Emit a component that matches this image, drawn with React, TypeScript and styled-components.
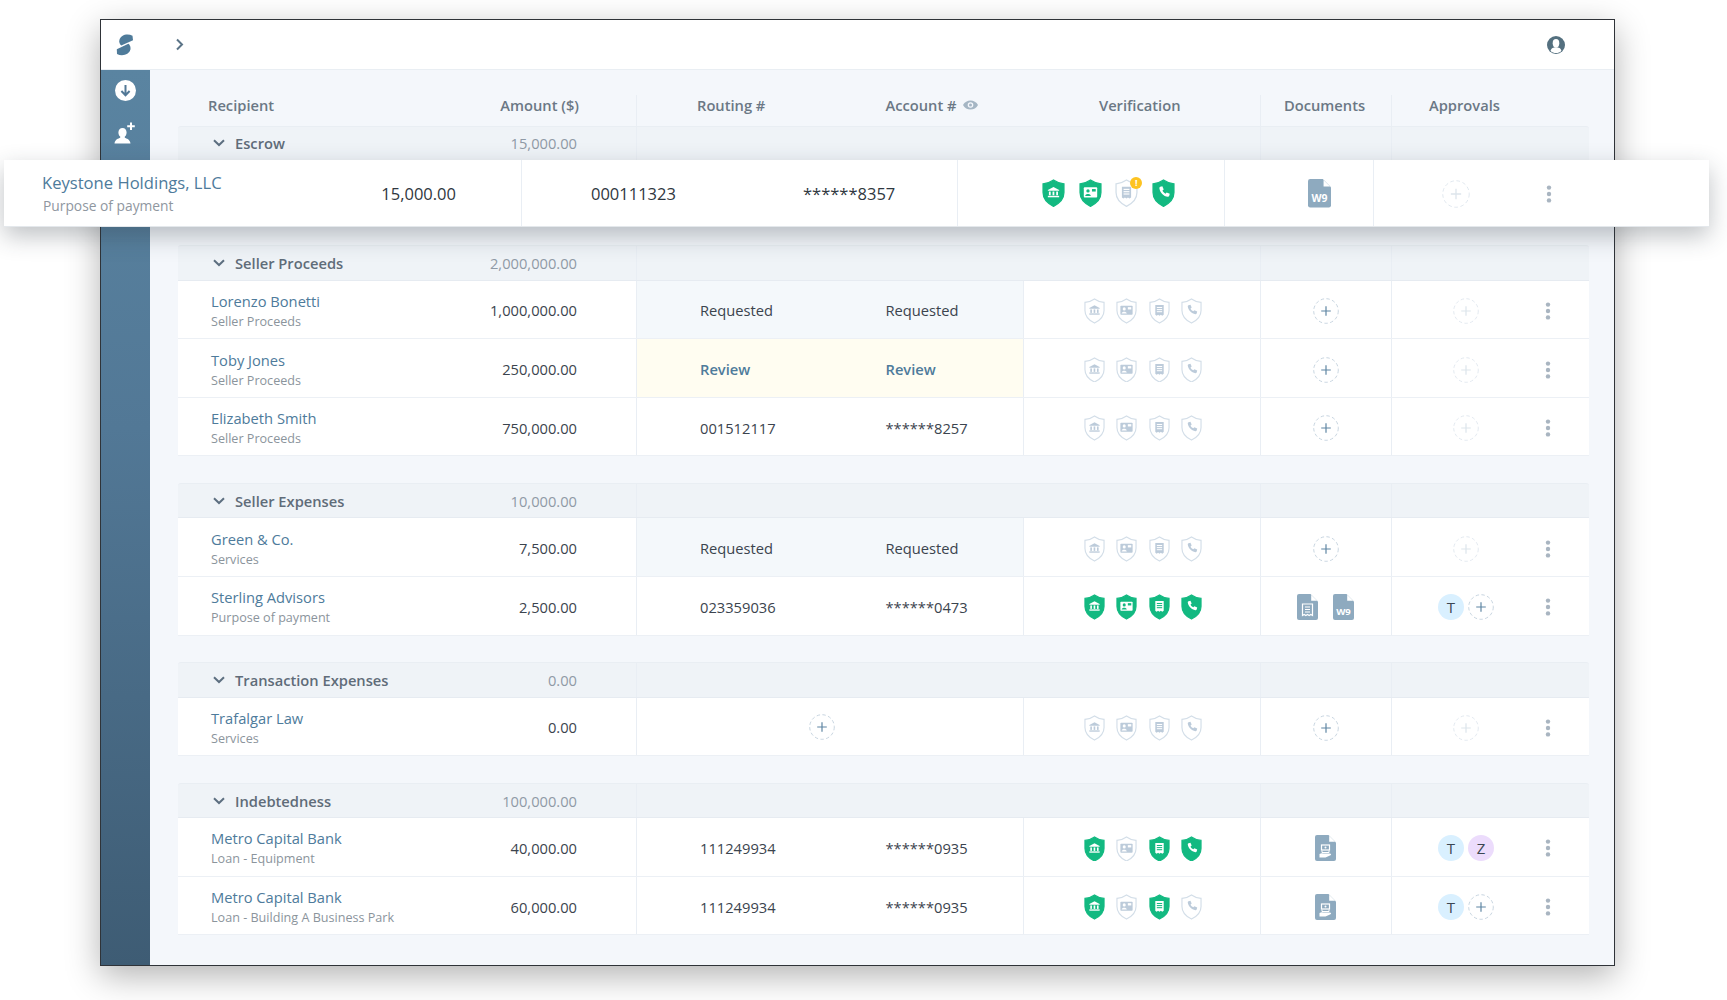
import React from "react";
import styled, { createGlobalStyle } from "styled-components";

const Global = createGlobalStyle`
  html, body { margin: 0; padding: 0; background: #fff; }
  body { font-family: "Open Sans", "Liberation Sans", sans-serif; color: #3b444e; }
  * { box-sizing: border-box; }
`;

const COLUMNS = "458px 387px 237px 131px 198px";
const LINE = "#e9eef4";

const Page = styled.div`
  position: relative;
  width: 1727px;
  height: 1000px;
  padding: 19px 0 0 100px;
  overflow: hidden;
`;
const Window = styled.div`
  width: 1515px;
  height: 947px;
  border: 1px solid #2f3338;
  background: #f4f7fb;
  box-shadow: 0 10px 32px rgba(0, 0, 0, 0.3);
  display: flex;
  flex-direction: column;
`;
const TopBar = styled.header`
  flex: 0 0 50px;
  background: #fff;
  border-bottom: 1px solid #e9eef3;
  display: flex;
  align-items: center;
  padding: 0 49px 0 15px;
`;
const ExpandButton = styled.span`
  display: flex;
  margin-left: 41px;
`;
const ProfileButton = styled.span`
  display: flex;
  margin-left: auto;
`;
const Body = styled.div`
  flex: 1;
  display: flex;
  min-height: 0;
`;
const SideBar = styled.nav`
  flex: 0 0 49px;
  background: linear-gradient(180deg, #5a84a1 0%, #527896 40%, #3e5c74 100%);
  display: flex;
  flex-direction: column;
  align-items: center;
  padding: 10px 1px 0 0;
  gap: 21px;
`;
const Content = styled.main`
  flex: 1;
  padding: 0 25px 0 28px;
`;
const HeaderRow = styled.div`
  display: grid;
  grid-template-columns: ${COLUMNS};
  height: 55.5px;
  padding-top: 25px;
  font-size: 14.7px;
  font-weight: 600;
  line-height: 20px;
  color: #6b7885;
`;
const HeaderCell = styled.div<{ $divider?: boolean; $pad?: number }>`
  display: flex;
  padding-left: ${(p) => p.$pad ?? 0}px;
  border-left: ${(p) => (p.$divider ? `1px solid ${LINE}` : "none")};
`;
const HeaderBank = styled.div`
  display: grid;
  grid-template-columns: 188.5px 1fr;
  align-content: start;
  padding-left: 60px;
  border-left: 1px solid ${LINE};
`;
const HeaderAmount = styled.span`
  margin-left: auto;
  padding-right: 57px;
`;
const HeaderAccount = styled.span`
  display: flex;
  align-items: center;
  gap: 5px;
`;
const Section = styled.section`
  margin-bottom: 26.7px;
`;
const GroupRow = styled.div`
  display: grid;
  grid-template-columns: 458px 624px 131px 198px;
  height: 35.3px;
  background: #eff3f7;
  border-top: 1px solid #e9eef3;
  border-bottom: 1px solid #e6ebf1;
  border-radius: 3px 3px 0 0;
  font-size: 14.7px;
`;
const GroupMain = styled.div`
  display: flex;
  align-items: center;
  padding: 0 59px 0 35px;
`;
const GroupLabel = styled.span`
  margin-left: 10px;
  font-weight: 600;
  color: #5f6c79;
`;
const GroupAmount = styled.span`
  margin-left: auto;
  color: #8f9aa6;
`;
const GroupCell = styled.div`
  border-left: 1px solid ${LINE};
`;
const Row = styled.div`
  display: grid;
  grid-template-columns: ${COLUMNS};
  height: 58.6px;
  background: #fff;
  border-bottom: 1px solid #ecf0f5;
  font-size: 14.7px;
`;
const BlankRow = styled.div`
  height: 57.9px;
  background: #fff;
`;
const RecipientCell = styled.div`
  display: flex;
  align-items: center;
  padding: 4px 59px 0 33px;
`;
const NameBlock = styled.div`
  display: flex;
  flex-direction: column;
`;
const Name = styled.span`
  font-size: 14.7px;
  line-height: 20px;
  color: #4e7b9b;
`;
const Sub = styled.span`
  margin-top: 1px;
  font-size: 12.6px;
  line-height: 20px;
  color: #8b949c;
`;
const Amount = styled.span`
  margin-left: auto;
  margin-top: -2px;
  color: #3b444e;
`;
const BankCell = styled.div<{ $tone?: "blue" | "yellow" }>`
  display: grid;
  grid-template-columns: 185.5px 1fr;
  align-items: center;
  padding: 2px 0 0 63px;
  border-left: 1px solid ${LINE};
  background: ${(p) =>
    p.$tone === "blue" ? "#f4f8fb" : p.$tone === "yellow" ? "#fffdf1" : "#fff"};
  color: ${(p) => (p.$tone === "yellow" ? "#4e7b9b" : "#3b444e")};
  font-weight: ${(p) => (p.$tone === "yellow" ? 600 : 400)};
`;
const AddBank = styled.span`
  display: flex;
  margin-left: 109px;
`;
const VerifyCell = styled.div`
  display: flex;
  align-items: center;
  gap: 11.5px;
  padding: 3px 0 0 59.5px;
  border-left: 1px solid ${LINE};
`;
const DocsCell = styled.div`
  display: flex;
  align-items: center;
  justify-content: center;
  gap: 15.5px;
  padding: 3px 1px 0 0;
  border-left: 1px solid ${LINE};
`;
const ApprovalCell = styled.div`
  display: grid;
  grid-template-columns: 148px 16px;
  align-items: center;
  padding-top: 3px;
  border-left: 1px solid ${LINE};
`;
const ApprovalSlot = styled.div`
  display: flex;
  justify-content: center;
  align-items: center;
  gap: 4px;
`;
const Avatar = styled.span<{ $bg: string }>`
  width: 26px;
  height: 26px;
  border-radius: 50%;
  background: ${(p) => p.$bg};
  color: #3b4652;
  font-size: 15px;
  line-height: 26px;
  text-align: center;
`;
const Highlight = styled.div`
  position: absolute;
  left: 4px;
  top: 160px;
  width: 1705px;
  height: 67px;
  display: grid;
  grid-template-columns: 517px 436px 267px 149px 336px;
  background: #fff;
  border-bottom: 1px solid #e4e8ec;
  box-shadow: 0 9px 24px rgba(40, 50, 60, 0.3);
`;
const HighlightMain = styled.div`
  display: flex;
  align-items: center;
  padding: 1px 65px 0 38px;
`;
const HighlightName = styled.span`
  font-size: 16.6px;
  line-height: 24px;
  color: #4e7b9b;
`;
const HighlightSub = styled.span`
  font-size: 13.8px;
  line-height: 21px;
  margin-left: 1px;
  color: #8f979f;
`;
const HighlightAmount = styled.span`
  margin-left: auto;
  font-size: 16.5px;
  color: #2f3740;
`;
const HighlightBank = styled.div`
  display: grid;
  grid-template-columns: 212px 1fr;
  align-items: center;
  padding: 1px 0 0 69px;
  border-left: 1px solid ${LINE};
  font-size: 16.5px;
  color: #2f3740;
`;
const HighlightVerify = styled.div`
  display: flex;
  align-items: center;
  gap: 13.7px;
  padding: 1px 0 0 84px;
  border-left: 1px solid ${LINE};
`;
const HighlightDocs = styled.div`
  display: flex;
  align-items: center;
  justify-content: center;
  padding: 1px 0 0 40px;
  border-left: 1px solid ${LINE};
`;
const HighlightApproval = styled.div`
  display: grid;
  grid-template-columns: 1fr 16px;
  width: 184px;
  align-items: center;
  padding-top: 2px;
  border-left: 1px solid ${LINE};
`;
const KebabSlot = styled.span`
  display: flex;
  justify-content: center;
`;
const HighlightPlus = styled.span`
  display: flex;
  justify-content: center;
  padding-right: 4px;
`;
const IconWrap = styled.span`
  position: relative;
  display: flex;
`;
const WarnDot = styled.span`
  position: absolute;
  right: -4px;
  top: -2px;
  width: 12px;
  height: 12px;
  border-radius: 50%;
  background: #fdc321;
  color: #fff;
  font-size: 9px;
  font-weight: 700;
  line-height: 12px;
  text-align: center;
`;

/* ---------- drawings ---------- */
const SHIELD =
  "M11 1 C14 3.2 17 4.2 21 4.6 V13 C21 19 16.5 23.5 11 26.2 C5.5 23.5 1 19 1 13 V4.6 C5 4.2 8 3.2 11 1Z";

type Kind = "bank" | "id" | "doc" | "phone";

const ShieldInner: React.FC<{ kind: Kind; ink: string; bg: string }> = ({ kind, ink, bg }) => {
  if (kind === "bank")
    return (
      <g fill={ink}>
        <path d="M11 7.6 L16.4 10.5 V11.2 H5.6 V10.5Z" />
        <rect x="6.6" y="12" width="1.7" height="3.6" />
        <rect x="10.1" y="12" width="1.7" height="3.6" />
        <rect x="13.6" y="12" width="1.7" height="3.6" />
        <rect x="5.6" y="16.1" width="10.8" height="1.4" />
      </g>
    );
  if (kind === "id")
    return (
      <g>
        <rect x="4.6" y="8" width="12.8" height="9.6" rx="0.8" fill={ink} />
        <circle cx="8.6" cy="11.4" r="1.6" fill={bg} />
        <path d="M5.9 16.2 C6.2 13.8 11 13.8 11.3 16.2Z" fill={bg} />
        <rect x="12.4" y="9.6" width="3.6" height="2.4" fill={bg} />
      </g>
    );
  if (kind === "doc")
    return (
      <g>
        <path d="M6.6 7.4 H15.4 V17.6 L13.9 18.6 12.4 17.6 11 18.6 9.5 17.6 8 18.6 6.6 17.6Z" fill={ink} />
        <rect x="8.2" y="9.4" width="5.6" height="1.1" fill={bg} />
        <rect x="8.2" y="11.6" width="5.6" height="1.1" fill={bg} />
        <rect x="8.2" y="13.8" width="5.6" height="1.1" fill={bg} />
      </g>
    );
  return (
    <path
      d="M7.9 7.5 L9.9 7 11.2 10 10 11.1 C10.5 12.4 11.6 13.5 12.9 14 L14 12.8 17 14.1 16.5 16.1 C16.3 16.7 15.7 17.1 15.1 17 C11 16.4 7.7 13.1 7.1 9 C7 8.4 7.3 7.7 7.9 7.5Z"
      fill={ink}
    />
  );
};

const Shield: React.FC<{ kind: Kind; on?: boolean; size?: number }> = ({ kind, on, size = 21 }) => (
  <svg width={size} height={(size * 27) / 22} viewBox="0 0 22 27">
    <path
      d={SHIELD}
      fill={on ? "#13b981" : "#fff"}
      stroke={on ? "#13b981" : "#d3dee8"}
      strokeWidth="1.2"
    />
    <ShieldInner kind={kind} ink={on ? "#fff" : "#bccbda"} bg={on ? "#13b981" : "#fff"} />
  </svg>
);

const DocShape: React.FC<{ size?: number; children?: React.ReactNode }> = ({ size = 21, children }) => (
  <svg width={size} height={(size * 26) / 21} viewBox="0 0 21 26">
    <path
      d="M2 0 H13.5 L21 7.5 V24 A2 2 0 0 1 19 26 H2 A2 2 0 0 1 0 24 V2 A2 2 0 0 1 2 0Z"
      fill="#8eaabf"
    />
    <path d="M14.2 0.8 L20.2 6.8 H14.2Z" fill="#fff" />
    {children}
  </svg>
);

const W9Doc: React.FC<{ size?: number }> = ({ size }) => (
  <DocShape size={size}>
    <text x="10.5" y="21" textAnchor="middle" fontSize="9.5" fontWeight="700" fill="#fff" fontFamily="Open Sans, sans-serif">
      W9
    </text>
  </DocShape>
);

const ReceiptDoc = () => (
  <DocShape>
    <path d="M5.5 10 H15.5 V21.5 L13.8 20.4 12.2 21.5 10.5 20.4 8.8 21.5 7.2 20.4 5.5 21.5Z" fill="none" stroke="#fff" strokeWidth="1.2" />
    <path d="M8 13 H13 M8 15.5 H13 M8 18 H13" stroke="#fff" strokeWidth="1.1" />
  </DocShape>
);

const LoanDoc = () => (
  <DocShape>
    <rect x="6.5" y="10" width="8" height="5" fill="none" stroke="#fff" strokeWidth="1.2" />
    <circle cx="10.5" cy="12.5" r="1" fill="#fff" />
    <path d="M7 15.5 V17.5 H14 V15.5" fill="none" stroke="#fff" strokeWidth="1" />
    <path d="M4.5 19 C6.5 17.5 8 18.5 10 18.5 H14.5 C16.5 18.5 16.5 20 15 20.6 L10.5 22.4 H4.5Z" fill="#fff" />
  </DocShape>
);

const PlusCircle: React.FC<{ faint?: boolean; size?: number }> = ({ faint, size = 26 }) => (
  <svg width={size} height={size} viewBox="0 0 26 26">
    <circle
      cx="13"
      cy="13"
      r="12.3"
      fill="none"
      stroke={faint ? "#e0e7ee" : "#c2d0dc"}
      strokeWidth="0.9"
      strokeDasharray="3.4 2.4"
    />
    <path d="M13 8.2 V17.8 M8.2 13 H17.8" stroke={faint ? "#dde5ec" : "#5f86a3"} strokeWidth="1.2" />
  </svg>
);

const Kebab = () => (
  <svg width="6" height="18" viewBox="0 0 6 18">
    <circle cx="3" cy="2.6" r="2.2" fill="#a9b5c1" />
    <circle cx="3" cy="9" r="2.2" fill="#a9b5c1" />
    <circle cx="3" cy="15.4" r="2.2" fill="#a9b5c1" />
  </svg>
);

const Chevron = () => (
  <svg width="12" height="8" viewBox="0 0 12 8">
    <path d="M1 1.2 L6 6 L11 1.2" fill="none" stroke="#5d6f80" strokeWidth="2" />
  </svg>
);

const Logo = () => (
  <svg width="18" height="22" viewBox="0 0 18 22">
    <path d="M16.5 1.8 C11.5 -1 4.5 1 3.4 6 C2.9 8.5 3.8 10.5 5.3 11.6 L17 6.2Z" fill="#4f7b9a" />
    <path d="M1 20 C6 22.6 13.2 20.8 14.4 15.6 C14.8 13 14 11 12.4 9.8 L0.8 15.2Z" fill="#4f7b9a" />
  </svg>
);

const Eye = () => (
  <svg width="17" height="12" viewBox="0 0 16 12">
    <path d="M0.5 6 C3.5 0 12.5 0 15.5 6 C12.5 12 3.5 12 0.5 6Z" fill="#a5b6c4" />
    <circle cx="8" cy="6" r="2.8" fill="#f4f7fb" />
    <circle cx="8" cy="6" r="1.5" fill="#a5b6c4" />
  </svg>
);

/* ---------- data ---------- */
type RowData = {
  name: string;
  sub: string;
  amount: string;
  routing?: string;
  account?: string;
  tone?: "blue" | "yellow";
  addBank?: boolean;
  verified?: boolean[];
  docs?: "add" | "both" | "loan";
  approvers?: "none" | "t" | "tz";
};

const KINDS: Kind[] = ["bank", "id", "doc", "phone"];
const NONE = [false, false, false, false];
const ALL = [true, true, true, true];

const GROUPS: { label: string; total: string; hidden?: boolean; rows: RowData[] }[] = [
  { label: "Escrow", total: "15,000.00", hidden: true, rows: [] },
  {
    label: "Seller Proceeds",
    total: "2,000,000.00",
    rows: [
      { name: "Lorenzo Bonetti", sub: "Seller Proceeds", amount: "1,000,000.00", routing: "Requested", account: "Requested", tone: "blue" },
      { name: "Toby Jones", sub: "Seller Proceeds", amount: "250,000.00", routing: "Review", account: "Review", tone: "yellow" },
      { name: "Elizabeth Smith", sub: "Seller Proceeds", amount: "750,000.00", routing: "001512117", account: "******8257" },
    ],
  },
  {
    label: "Seller Expenses",
    total: "10,000.00",
    rows: [
      { name: "Green & Co.", sub: "Services", amount: "7,500.00", routing: "Requested", account: "Requested", tone: "blue" },
      { name: "Sterling Advisors", sub: "Purpose of payment", amount: "2,500.00", routing: "023359036", account: "******0473", verified: ALL, docs: "both", approvers: "t" },
    ],
  },
  {
    label: "Transaction Expenses",
    total: "0.00",
    rows: [{ name: "Trafalgar Law", sub: "Services", amount: "0.00", addBank: true }],
  },
  {
    label: "Indebtedness",
    total: "100,000.00",
    rows: [
      { name: "Metro Capital Bank", sub: "Loan - Equipment", amount: "40,000.00", routing: "111249934", account: "******0935", verified: [true, false, true, true], docs: "loan", approvers: "tz" },
      { name: "Metro Capital Bank", sub: "Loan - Building A Business Park", amount: "60,000.00", routing: "111249934", account: "******0935", verified: [true, false, true, false], docs: "loan", approvers: "t" },
    ],
  },
];

const TableRow: React.FC<{ row: RowData }> = ({ row }) => {
  const verified = row.verified ?? NONE;
  return (
    <Row>
      <RecipientCell>
        <NameBlock>
          <Name>{row.name}</Name>
          <Sub>{row.sub}</Sub>
        </NameBlock>
        <Amount>{row.amount}</Amount>
      </RecipientCell>
      <BankCell $tone={row.tone}>
        {row.addBank ? (
          <AddBank>
            <PlusCircle />
          </AddBank>
        ) : (
          <>
            <span>{row.routing}</span>
            <span>{row.account}</span>
          </>
        )}
      </BankCell>
      <VerifyCell>
        {KINDS.map((k, i) => (
          <Shield key={k} kind={k} on={verified[i]} />
        ))}
      </VerifyCell>
      <DocsCell>
        {row.docs === "both" ? (
          <>
            <ReceiptDoc />
            <W9Doc />
          </>
        ) : row.docs === "loan" ? (
          <LoanDoc />
        ) : (
          <PlusCircle />
        )}
      </DocsCell>
      <ApprovalCell>
        <ApprovalSlot>
          {row.approvers === "t" || row.approvers === "tz" ? <Avatar $bg="#d9f0ff">T</Avatar> : null}
          {row.approvers === "tz" ? <Avatar $bg="#ecdcfc">Z</Avatar> : null}
          {row.approvers === "t" ? <PlusCircle /> : null}
          {!row.approvers || row.approvers === "none" ? <PlusCircle faint /> : null}
        </ApprovalSlot>
        <KebabSlot>
          <Kebab />
        </KebabSlot>
      </ApprovalCell>
    </Row>
  );
};

export default function App() {
  return (
    <Page>
      <Global />
      <Window>
        <TopBar>
          <Logo />
          <ExpandButton>
            <svg width="9" height="13" viewBox="0 0 9 13">
              <path d="M2 1.5 L7 6.5 L2 11.5" fill="none" stroke="#5b7487" strokeWidth="2" />
            </svg>
          </ExpandButton>
          <ProfileButton>
            <svg width="18" height="18" viewBox="0 0 18 18">
              <circle cx="9" cy="9" r="9" fill="#54707f" />
              <ellipse cx="9" cy="7.2" rx="3.3" ry="4.2" fill="#fff" />
              <path d="M3.6 15 C4 12 6.5 11.2 9 11.2 C11.5 11.2 14 12 14.4 15 C12.8 16.4 11 17 9 17 C7 17 5.2 16.4 3.6 15Z" fill="#fff" />
            </svg>
          </ProfileButton>
        </TopBar>
        <Body>
          <SideBar>
            <svg width="21" height="21" viewBox="0 0 21 21">
              <circle cx="10.5" cy="10.5" r="10.5" fill="#fff" />
              <path d="M10.5 5 V15 M6.4 11 L10.5 15.2 L14.6 11" fill="none" stroke="#527896" strokeWidth="2" />
            </svg>
            <svg width="22" height="22" viewBox="0 0 22 22">
              <path d="M8.5 6 C11 6 12.6 8 12.6 10.4 C12.6 12.2 11.8 13.7 10.8 14.6 V15.8 C12.5 16.6 16 17.3 16.5 21.5 H0.5 C1 17.3 4.5 16.6 6.2 15.8 V14.6 C5.2 13.7 4.4 12.2 4.4 10.4 C4.4 8 6 6 8.5 6Z" fill="#fff" />
              <path d="M17 0.5 V8 M13.2 4.2 H20.8" stroke="#fff" strokeWidth="2" />
            </svg>
          </SideBar>
          <Content>
            <HeaderRow>
              <HeaderCell $pad={30}>
                Recipient
                <HeaderAmount>Amount ($)</HeaderAmount>
              </HeaderCell>
              <HeaderBank>
                <span>Routing #</span>
                <HeaderAccount>
                  Account #
                  <Eye />
                </HeaderAccount>
              </HeaderBank>
              <HeaderCell $pad={76}>Verification</HeaderCell>
              <HeaderCell $divider $pad={23}>Documents</HeaderCell>
              <HeaderCell $divider $pad={37}>Approvals</HeaderCell>
            </HeaderRow>
            {GROUPS.map((g) => (
              <Section key={g.label}>
                <GroupRow>
                  <GroupMain>
                    <Chevron />
                    <GroupLabel>{g.label}</GroupLabel>
                    <GroupAmount>{g.total}</GroupAmount>
                  </GroupMain>
                  <GroupCell />
                  <GroupCell />
                  <GroupCell />
                </GroupRow>
                {g.hidden ? <BlankRow /> : null}
                {g.rows.map((r) => (
                  <TableRow key={r.name + r.sub} row={r} />
                ))}
              </Section>
            ))}
          </Content>
        </Body>
      </Window>
      <Highlight>
        <HighlightMain>
          <NameBlock>
            <HighlightName>Keystone Holdings, LLC</HighlightName>
            <HighlightSub>Purpose of payment</HighlightSub>
          </NameBlock>
          <HighlightAmount>15,000.00</HighlightAmount>
        </HighlightMain>
        <HighlightBank>
          <span>000111323</span>
          <span>******8357</span>
        </HighlightBank>
        <HighlightVerify>
          <Shield kind="bank" on size={23} />
          <Shield kind="id" on size={23} />
          <IconWrap>
            <Shield kind="doc" size={23} />
            <WarnDot>!</WarnDot>
          </IconWrap>
          <Shield kind="phone" on size={23} />
        </HighlightVerify>
        <HighlightDocs>
          <W9Doc size={23} />
        </HighlightDocs>
        <HighlightApproval>
          <HighlightPlus>
            <PlusCircle faint size={28} />
          </HighlightPlus>
          <KebabSlot>
            <Kebab />
          </KebabSlot>
        </HighlightApproval>
      </Highlight>
    </Page>
  );
}
